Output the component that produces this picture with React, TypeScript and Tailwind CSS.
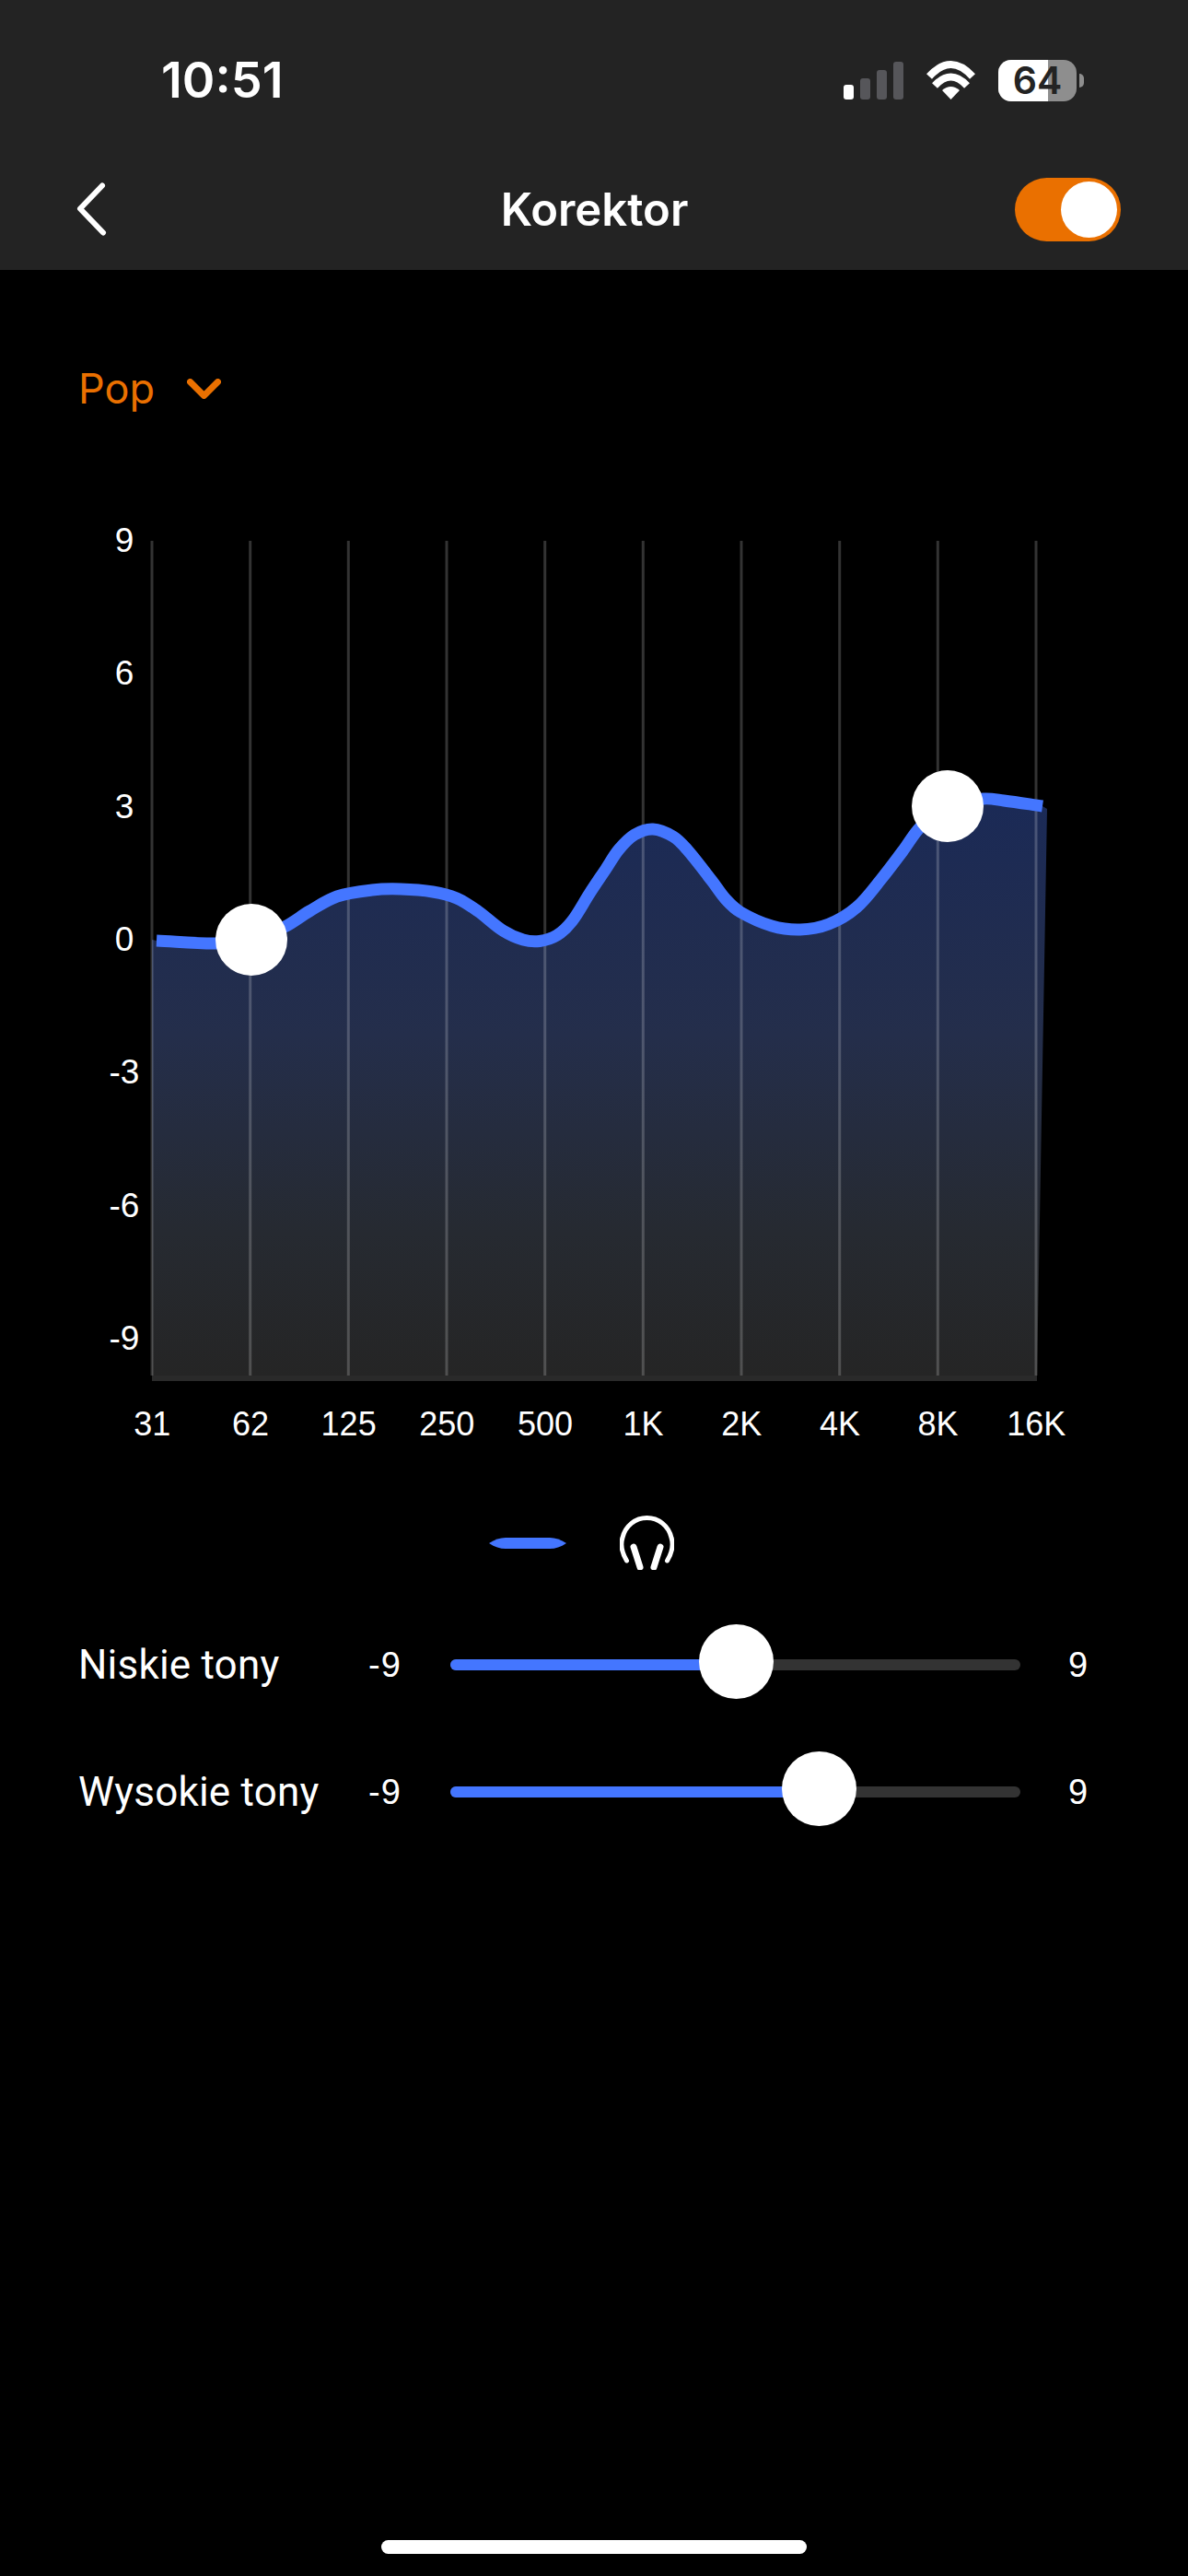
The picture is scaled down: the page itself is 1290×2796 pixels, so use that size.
const yLabels = ["9", "6", "3", "0", "-3", "-6", "-9"];
const xLabels = ["31", "62", "125", "250", "500", "1K", "2K", "4K", "8K", "16K"];
const gridX = [165, 271.7, 378.3, 485, 591.7, 698.3, 805, 911.7, 1018.3, 1125];

// curve points, page coordinates
const pts: [number, number][] = [
  [170, 1021], [234, 1024], [273, 1020], [309, 1006], [336, 989], [366, 973], [404, 966], [435, 965],
  [470, 968], [496, 975], [519, 989], [546, 1010], [568, 1020], [586, 1021.5], [605, 1015], [621, 1000],
  [640, 970], [658, 943], [672, 922], [689, 906], [709, 900], [731, 908], [746, 922], [773, 956],
  [788, 976], [804, 990], [838, 1005], [869, 1009], [900, 1003], [930, 985], [957, 954], [980, 924],
  [1000, 897], [1029, 875], [1068, 867], [1090, 869], [1132, 875],
];

// tangents are scaled by segment length so uneven spacing does not kink
function smooth(points: [number, number][]) {
  const tangent = (i: number): [number, number] => {
    const a = points[Math.max(i - 1, 0)];
    const b = points[Math.min(i + 1, points.length - 1)];
    const len = Math.hypot(b[0] - a[0], b[1] - a[1]);
    return [(b[0] - a[0]) / len, (b[1] - a[1]) / len];
  };
  let d = `M${points[0][0]} ${points[0][1]}`;
  for (let i = 0; i < points.length - 1; i++) {
    const p1 = points[i];
    const p2 = points[i + 1];
    const len = Math.hypot(p2[0] - p1[0], p2[1] - p1[1]) / 3;
    const t1 = tangent(i);
    const t2 = tangent(i + 1);
    d += ` C${p1[0] + t1[0] * len} ${p1[1] + t1[1] * len} ${p2[0] - t2[0] * len} ${p2[1] - t2[1] * len} ${p2[0]} ${p2[1]}`;
  }
  return d;
}

const curve = smooth(pts);
const area = `M165 1020 L170 1021 ${curve.slice(curve.indexOf("C"))} L1137 878 L1126 1493 L165 1493 Z`;

function StatusIcons() {
  return (
    <div className="flex items-center">
      <div className="flex items-end gap-[7px] h-[41px]">
        <div className="w-[11px] h-[16px] rounded-[3px] bg-white" />
        <div className="w-[11px] h-[23px] rounded-[3px] bg-[#56565a]" />
        <div className="w-[11px] h-[32px] rounded-[3px] bg-[#56565a]" />
        <div className="w-[11px] h-[41px] rounded-[3px] bg-[#56565a]" />
      </div>
      <svg className="ml-[23px]" width="57" height="42" viewBox="0 0 57 42" fill="none">
        <path d="M5 17 Q28.5 -9 52 17" stroke="#fff" strokeWidth="8" />
        <path d="M11 27 Q28.5 8 46 27" stroke="#fff" strokeWidth="8" />
        <path d="M19 32 Q28.5 24 38 32 L28.5 42 Z" fill="#fff" />
      </svg>
      <div className="ml-[23px] relative w-[85px] h-[45px] rounded-[14px] bg-[#8e8e8e]">
        <div className="h-full w-[54px] rounded-l-[14px] bg-white" />
        <span className="absolute inset-0 flex items-center justify-center text-[41px] leading-none font-semibold text-[#232323]">
          64
        </span>
      </div>
      <div className="ml-[3px] w-[5px] h-[15px] rounded-r-full bg-[#8e8e8e]" />
    </div>
  );
}

function Slider({ label, fill, knob, top }: { label: string; fill: string; knob: string; top: string }) {
  return (
    <div className={`flex items-center h-[80px] pl-[85px] ${top}`}>
      <span className="w-[315px] font-[Roboto,sans-serif] text-[44px] tracking-[0.2px] leading-none text-white">{label}</span>
      <span className="w-[89px] font-['Liberation_Sans',sans-serif] text-[38px] tracking-[1px] leading-none text-white">-9</span>
      <div className="relative w-[619px] h-[12px] rounded-full bg-[#333333]">
        <div className={`h-full rounded-full bg-[#4476ff] ${fill}`} />
        <div className={`absolute top-[-38px] w-[81px] h-[81px] rounded-full bg-white ${knob}`} />
      </div>
      <span className="ml-[52px] font-['Liberation_Sans',sans-serif] text-[38px] leading-none text-white">9</span>
    </div>
  );
}

export default function App() {
  return (
    <div className="w-[1290px] h-[2796px] bg-black flex flex-col font-[Inter,sans-serif] overflow-hidden">
      {/* Header */}
      <div className="h-[293px] bg-[#232323]">
        <div className="h-[174px] flex items-center justify-between pl-[175px] pr-[113px]">
          <span className="text-[54px] leading-none font-semibold text-white">10:51</span>
          <StatusIcons />
        </div>
        <div className="h-[107px] grid grid-cols-[1fr_auto_1fr] items-center pl-[74px] pr-[73px]">
          <svg className="ml-[2px]" width="44" height="60" viewBox="0 0 44 60" fill="none">
            <path d="M35 3.5 L11 28.5 L36 54.5" stroke="#fff" strokeWidth="6" strokeLinecap="round" strokeLinejoin="round" />
          </svg>
          <span className="text-[49px] leading-none font-semibold text-white">Korektor</span>
          <div className="justify-self-end flex items-center justify-end w-[115px] h-[69px] rounded-full bg-[#ea7000] pr-[4px]">
            <div className="w-[61px] h-[61px] rounded-full bg-white" />
          </div>
        </div>
      </div>

      {/* Preset */}
      <div className="flex items-center pl-[85px] pt-[105px]">
        <span className="text-[45px] leading-[48px] text-[#ea7000]">Pop</span>
        <svg className="ml-[35px]" width="37" height="22" viewBox="0 0 37 22" fill="none">
          <path d="M3.5 3.5 L18.5 18.5 L33.5 3.5" stroke="#ea7000" strokeWidth="7" strokeLinecap="round" strokeLinejoin="round" />
        </svg>
      </div>

      {/* Chart */}
      <div className="flex items-start mt-[119px] pl-[110px]">
        <div className="w-[50px] h-[910px] flex flex-col justify-between items-center font-['Liberation_Sans',sans-serif] text-[37px] leading-[44px] text-white">
          {yLabels.map((l) => (
            <span key={l}>{l}</span>
          ))}
        </div>
        <svg className="mt-[22px]" width="1000" height="912" viewBox="160 587 1000 912" fill="none">
          <defs>
            <linearGradient id="eq" gradientUnits="userSpaceOnUse" x1="0" y1="875" x2="0" y2="1493">
              <stop offset="0" stopColor="#1b2a56" />
              <stop offset="0.4" stopColor="#242e4b" />
              <stop offset="0.75" stopColor="#262a31" />
              <stop offset="1" stopColor="#252525" />
            </linearGradient>
          </defs>
          <path d={area} fill="url(#eq)" />
          {gridX.map((x) => (
            <line key={x} x1={x} x2={x} y1="587" y2="1493" stroke="#fff" strokeOpacity="0.2" strokeWidth="3" />
          ))}
          <rect x="165" y="1493" width="961" height="6" fill="#2a2a2a" />
          <path d={curve} stroke="#4476ff" strokeWidth="13" />
          <circle cx="273" cy="1020" r="39" fill="#fff" />
          <circle cx="1029" cy="875" r="39" fill="#fff" />
        </svg>
      </div>

      {/* Band labels */}
      <div className="flex pl-[112px] mt-[25px] font-['Liberation_Sans',sans-serif] text-[36px] leading-[44px] text-white">
        {xLabels.map((l) => (
          <span key={l} className="w-[106.67px] text-center">
            {l}
          </span>
        ))}
      </div>

      {/* Legend */}
      <div className="flex items-center gap-[58px] ml-[531px] mt-[77px]">
        <svg width="84" height="12" viewBox="0 0 84 12">
          <path d="M0 6 C6 2 12 0 18 0 H66 C72 0 78 2 84 6 C78 10 72 12 66 12 H18 C12 12 6 10 0 6Z" fill="#4476ff" />
        </svg>
        <svg width="59" height="59" viewBox="0 0 59 59" fill="none" stroke="#fff" strokeLinecap="round">
          <path d="M7.5 49 C1 38 1 30 3 24 C6 11 17 2.5 29.5 2.5 C42 2.5 53 11 56 24 C58 30 58 38 51.5 49" strokeWidth="5" />
          <path d="M15 34 L22 56" strokeWidth="7" />
          <path d="M44 34 L37 56" strokeWidth="7" />
        </svg>
      </div>

      {/* Sliders */}
      <Slider label="Niskie tony" fill="w-[310px]" knob="left-[270px]" top="mt-[63px]" />
      <Slider label="Wysokie tony" fill="w-[400px]" knob="left-[360px]" top="mt-[58px]" />

      <div className="mt-auto mb-[24px] self-center w-[462px] h-[15px] rounded-full bg-white" />
    </div>
  );
}
